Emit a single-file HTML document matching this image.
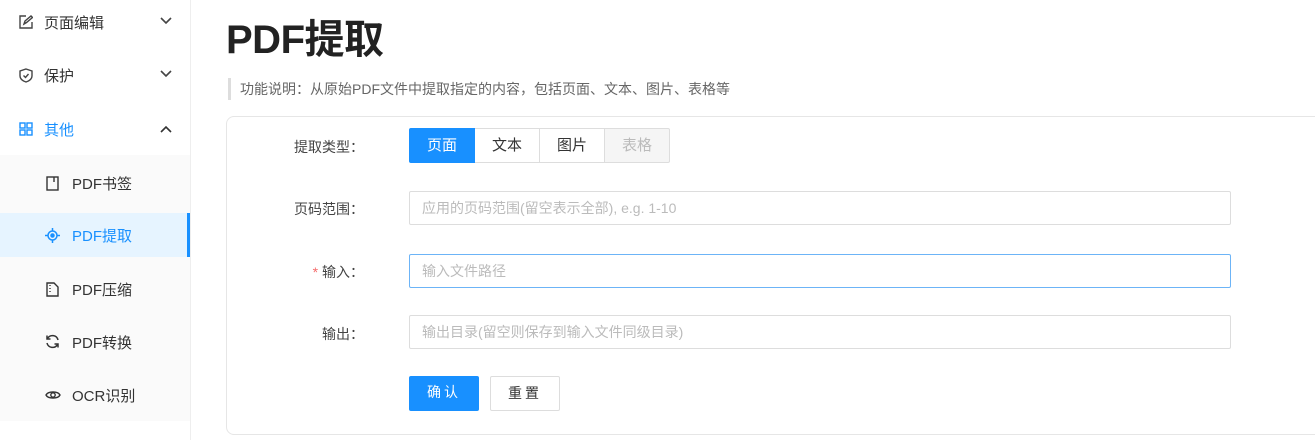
<!DOCTYPE html>
<html><head><meta charset="utf-8"><style>
*{box-sizing:border-box;margin:0;padding:0}
body{width:1315px;height:440px;overflow:hidden;background:#fff;font-family:"Liberation Sans","Noto Sans CJK SC",sans-serif;font-size:14px;color:#333;position:relative}
.side{position:absolute;left:0;top:0;width:191px;height:440px;border-right:1px solid #eee;background:#fff}
.sub{position:absolute;left:0;top:155px;width:190px;height:266px;background:#fafafa}
.it{position:absolute;left:0;width:190px;height:44px;display:flex;align-items:center;font-size:15px}
.it svg{position:absolute}
.act{background:#e6f4ff;color:#1890ff;border-right:3px solid #1890ff}
.t{position:absolute}
h1{position:absolute;left:226px;top:7px;font-size:40px;font-weight:bold;color:#222;letter-spacing:-0.5px}
.desc{position:absolute;left:228px;top:78px;height:22px;border-left:3px solid #ddd;padding-left:9px;line-height:22px;color:#666;font-size:14px}
.card{position:absolute;left:226px;top:116px;width:1100px;height:319px;border:1px solid #e6e6e6;border-radius:8px}
.lbl{position:absolute;right:951px;font-size:14px;color:#444}
.seg{position:absolute;top:128px;height:35px;border:1px solid #ddd;line-height:33px;text-align:center;font-size:15px}
.inp{position:absolute;left:409px;width:822px;height:34px;border:1px solid #ddd;border-radius:2px;padding-left:12px;line-height:32px;color:#bbb;font-size:14px}
.btn{position:absolute;top:376px;height:35px;line-height:33px;text-align:center;font-size:14px;border-radius:2px;letter-spacing:3px}
</style></head><body>
<div class="side">
<div class="sub"></div>
<div class="it" style="top:0"><svg style="left:19px;top:15px" width="14" height="14" viewBox="0 0 14 14" fill="none" stroke="#444" stroke-width="1.4"><path d="M7 1H1v12h12V7"/><path d="M5 9l1-3 6-5 1.5 1.5-6 5z"/></svg><span class="t" style="left:44px">页面编辑</span><svg style="left:160px;top:17px" width="12" height="8" viewBox="0 0 12 8" fill="none" stroke="#444" stroke-width="1.6"><path d="M1 1l5 5 5-5"/></svg></div>
<div class="it" style="top:53px"><svg style="left:19px;top:15px" width="14" height="15" viewBox="0 0 14 15" fill="none" stroke="#444" stroke-width="1.4"><path d="M7 1l6 2v5c0 3-3 5-6 6-3-1-6-3-6-6V3z"/><path d="M4.5 7.5l2 2 3-3.5"/></svg><span class="t" style="left:44px">保护</span><svg style="left:160px;top:17px" width="12" height="8" viewBox="0 0 12 8" fill="none" stroke="#444" stroke-width="1.6"><path d="M1 1l5 5 5-5"/></svg></div>
<div class="it" style="top:107px;color:#1890ff"><svg style="left:19px;top:15px" width="14" height="14" viewBox="0 0 14 14" fill="none" stroke="#1890ff" stroke-width="1.4"><rect x="1" y="1" width="5" height="5"/><rect x="8" y="1" width="5" height="5"/><rect x="1" y="8" width="5" height="5"/><rect x="8" y="8" width="5" height="5"/></svg><span class="t" style="left:44px">其他</span><svg style="left:160px;top:18px" width="12" height="8" viewBox="0 0 12 8" fill="none" stroke="#333" stroke-width="1.6"><path d="M1 7l5-5 5 5"/></svg></div>
<div class="it" style="top:161px"><svg style="left:46px;top:15px" width="13" height="15" viewBox="0 0 13 15" fill="none" stroke="#333" stroke-width="1.4"><rect x="1" y="1" width="11" height="13"/><path d="M8 1v5"/></svg><span class="t" style="left:72px">PDF书签</span></div>
<div class="it act" style="top:213px;height:44px"><svg style="left:45px;top:15px" width="15" height="15" viewBox="0 0 15 15" fill="none" stroke="#1890ff" stroke-width="1.5"><circle cx="7.5" cy="7.5" r="4.5"/><circle cx="7.5" cy="7.5" r="1.5" fill="#1890ff"/><path d="M7.5 0v3M7.5 12v3M0 7.5h3M12 7.5h3"/></svg><span class="t" style="left:72px">PDF提取</span></div>
<div class="it" style="top:267px"><svg style="left:46px;top:15px" width="13" height="15" viewBox="0 0 13 15" fill="none" stroke="#333" stroke-width="1.4"><path d="M1 1h7l4 4v9H1z"/><path d="M4 3v1M4 6v1M4 9v1"/></svg><span class="t" style="left:72px">PDF压缩</span></div>
<div class="it" style="top:320px"><svg style="left:45px;top:14px" width="15" height="15" viewBox="0 0 15 15" fill="none" stroke="#333" stroke-width="1.5"><path d="M13 6A5.7 5.7 0 0 0 2.5 4.5M2 9a5.7 5.7 0 0 0 10.5 1.5"/><path d="M2 1.5v3.5h3.5M13 13.5V10H9.5"/></svg><span class="t" style="left:72px">PDF转换</span></div>
<div class="it" style="top:373px"><svg style="left:45px;top:16px" width="16" height="12" viewBox="0 0 16 12" fill="none" stroke="#333" stroke-width="1.4"><path d="M1 6c2-4 12-4 14 0-2 4-12 4-14 0z"/><circle cx="8" cy="6" r="2.2"/></svg><span class="t" style="left:72px">OCR识别</span></div>
</div>
<h1>PDF提取</h1>
<div class="desc">功能说明：从原始PDF文件中提取指定的内容，包括页面、文本、图片、表格等</div>
<div class="card"></div>
<div class="lbl" style="top:137px">提取类型：</div>
<div class="seg" style="left:409px;width:66px;background:#1890ff;border-color:#1890ff;color:#fff;border-radius:2px 0 0 2px">页面</div>
<div class="seg" style="left:475px;width:65px;border-left:none">文本</div>
<div class="seg" style="left:539px;width:66px">图片</div>
<div class="seg" style="left:604px;width:66px;background:#f5f5f5;color:#bbb;border-radius:0 2px 2px 0">表格</div>
<div class="lbl" style="top:199px">页码范围：</div>
<div class="inp" style="top:191px">应用的页码范围(留空表示全部), e.g. 1-10</div>
<div class="lbl" style="top:262px"><span style="color:#f56c6c">*</span> 输入：</div>
<div class="inp" style="top:254px;border-color:#6cb4f7">输入文件路径</div>
<div class="lbl" style="top:324px">输出：</div>
<div class="inp" style="top:315px">输出目录(留空则保存到输入文件同级目录)</div>
<div class="btn" style="left:409px;width:70px;background:#1890ff;color:#fff">确认</div>
<div class="btn" style="left:490px;width:70px;border:1px solid #ddd;color:#333">重置</div>
</body></html>
